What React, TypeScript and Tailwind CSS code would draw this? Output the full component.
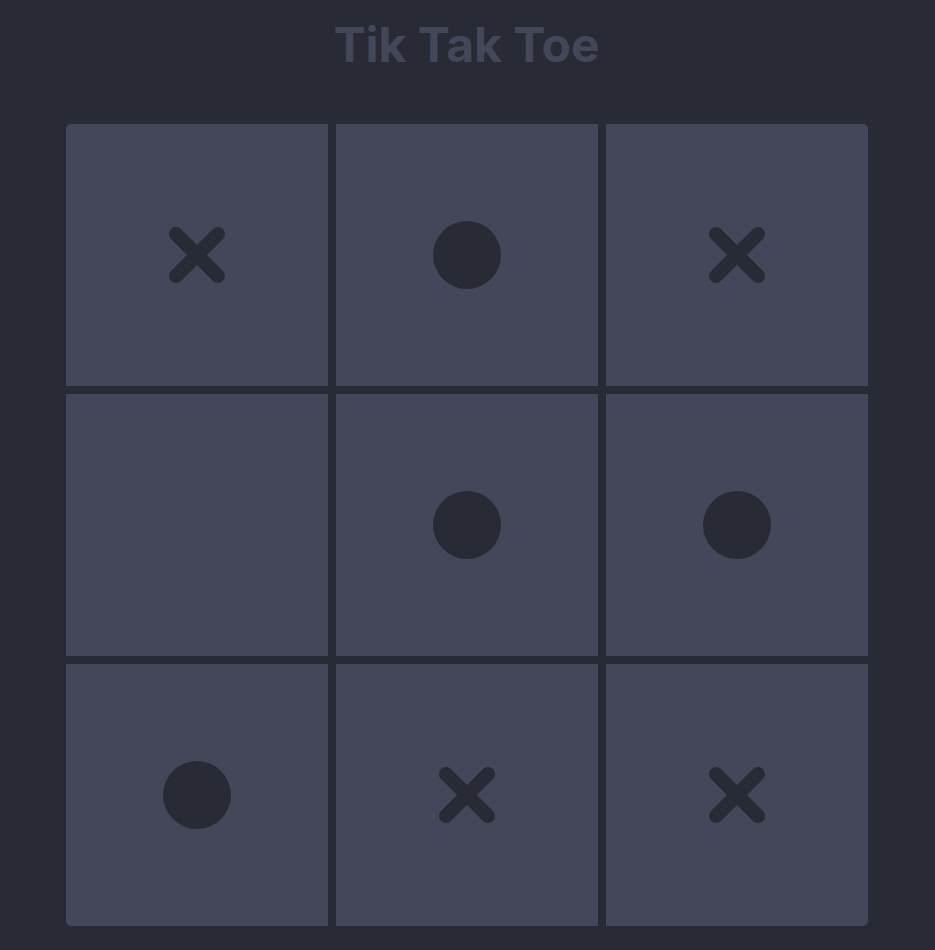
const board: ("x" | "o" | "")[] = ["x", "o", "x", "", "o", "o", "o", "x", "x"];

function Cross() {
  return (
    <svg width="56" height="56" viewBox="0 0 56 56" fill="none">
      <path d="M7 7L49 49M49 7L7 49" stroke="#282a36" strokeWidth="14" strokeLinecap="round" />
    </svg>
  );
}

function Circle() {
  return <div className="w-[68px] h-[68px] rounded-full bg-[#282a36]" />;
}

export default function App() {
  return (
    <div className="min-h-screen bg-[#282a36] flex flex-col font-['Inter',sans-serif]">
      <h1 className="mt-[16px] h-[58px] pr-[2px] text-center text-[48px] leading-[58px] font-bold text-[#44475a]">Tik Tak Toe</h1>
      <div className="mt-[50px] ml-[66px] self-start grid grid-cols-[repeat(3,262px)] gap-2 rounded-[5px] overflow-hidden">
        {board.map((v, i) => (
          <button key={i} className="h-[262px] bg-[#44475a] flex items-center justify-center">
            {v === "x" ? <Cross /> : v === "o" ? <Circle /> : null}
          </button>
        ))}
      </div>
    </div>
  );
}
